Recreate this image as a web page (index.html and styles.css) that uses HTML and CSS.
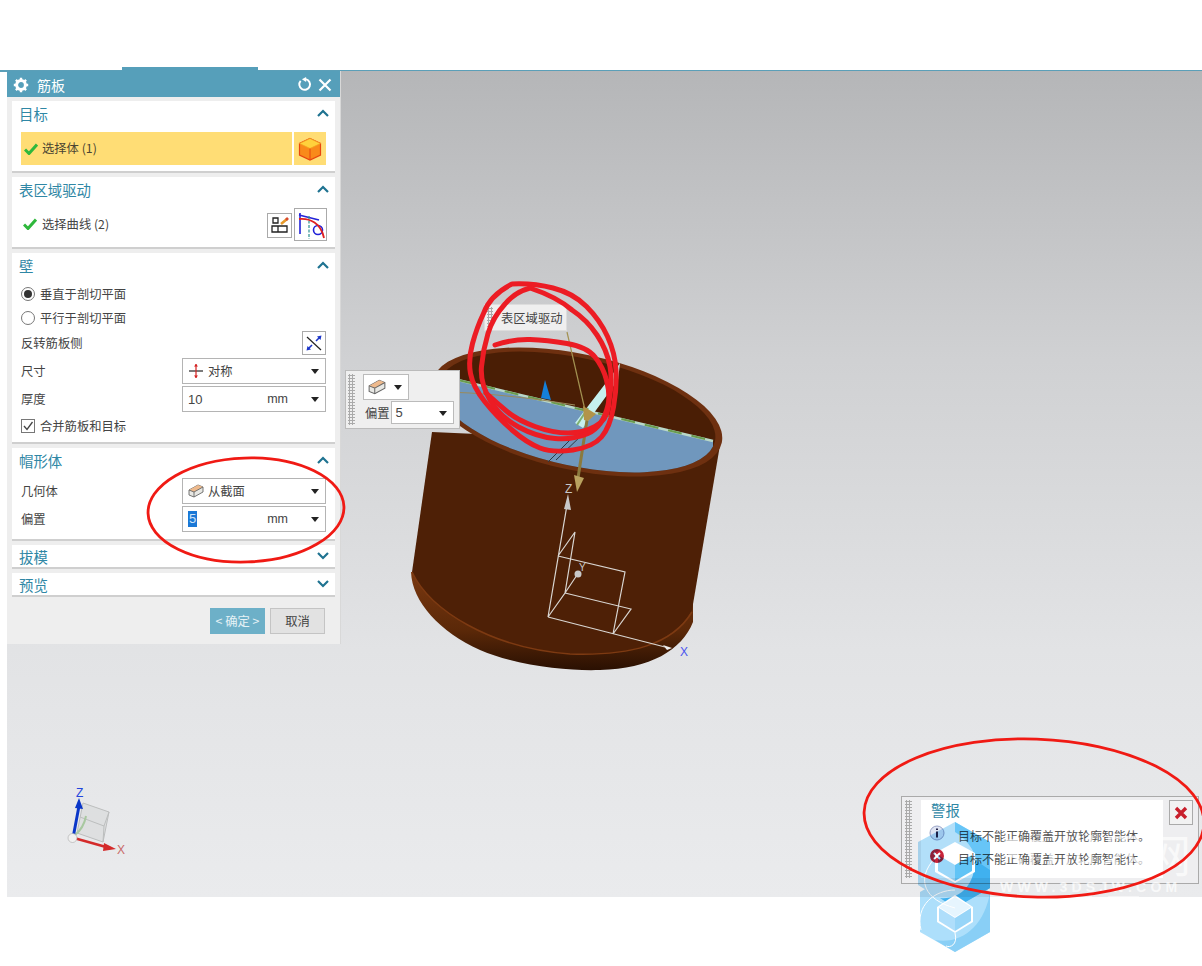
FILE: index.html
```html
<!DOCTYPE html>
<html lang="zh-CN">
<head>
  <meta charset="UTF-8" />
  <title>筋板</title>
  <link rel="stylesheet" href="styles.css">
</head>
<body>
  <div class="top-band"><div class="top-tab"></div></div>

  <div class="viewport">
    <!-- model -->
    <svg class="model" width="1195" height="826" viewBox="7 71 1195 826">
      <defs>
        <linearGradient id="flange" x1="0" y1="0" x2="0" y2="1">
          <stop offset="0" stop-color="#7a3810" />
          <stop offset=".6" stop-color="#5a2808" />
          <stop offset="1" stop-color="#2a1002" />
        </linearGradient>
        <clipPath id="inner">
          <ellipse cx="577" cy="412" rx="141" ry="54" transform="rotate(12 577 412)" />
        </clipPath>
      </defs>
      <path d="M411 572C412 602 440 632 480 650C520 667 570 671 600 670C650 669 682 650 693 622L693 600Z" fill="url(#flange)" />
      <path d="M432 432L412 572C430 610 490 648 570 654C630 656 672 645 692 610L720 445Z" fill="#4e2006" />
      <path d="M412 572C430 610 490 648 570 654C630 656 672 645 692 612" fill="none" stroke="#7d3a12" stroke-width="1.5" />
      <ellipse cx="577" cy="412" rx="148" ry="58" transform="rotate(12 577 412)" fill="#6e3010" />
      <ellipse cx="577" cy="412" rx="141" ry="54" transform="rotate(12 577 412)" fill="#4a1e05" />
      <path d="M400 366L713 441L713 520L400 520Z" fill="#7097bd" clip-path="url(#inner)" />
      <path d="M458 380L713 441" stroke="#b9d8c8" stroke-width="2.5" />
      <path d="M458 380L713 441" stroke="#6a9c50" stroke-width="2" stroke-dasharray="14 10" />
      <path d="M345 398Q420 390 470 393T575 405" fill="none" stroke="#9a8a5a" stroke-width="1" />
      <path d="M545 380L541 398L551 400Z" fill="#1580d8" />
      <path d="M575 423L612 375L620 363L618 380L583 428Z" fill="#c6f0ee" />
      <path d="M577 425L588 408" stroke="#7fb070" stroke-width="2" />
      <path d="M567 332L585 410" stroke="#a39252" stroke-width="1.2" />
      <path d="M570 440L548 462M585 432L556 460" stroke="#2c3a44" stroke-width="1" />
      <path d="M587 420L578 478" stroke="#8a7a3e" stroke-width="3" />
      <path d="M583 406L596 414L588 421L584 420Z" fill="#b29449" />
      <path d="M574 475L584 478L577 492Z" fill="#b9a25f" />
      <!-- datum csys -->
      <g fill="none" stroke="#d9d6d2" stroke-width="1.2">
        <path d="M548 617L567 505M548 617L665 647M558 556L575 532L565 593L548 617M558 556L625 572L613 634M565 593L631 609L613 634M565 593L579 572" />
      </g>
      <path d="M568 494L564 509L571 510Z" fill="#c8c8c8" />
      <circle cx="578" cy="574" r="3.5" fill="#c8c8c8" />
      <path d="M663 645L672 648L667 650Z" fill="#eee" />
      <text x="565" y="493" class="axis axis-grey">Z</text>
      <text x="579" y="571" class="axis axis-grey axis-small">Y</text>
      <text x="680" y="656" class="axis axis-blue">X</text>
    </svg>

    <!-- dialog -->
    <div class="panel">
      <div class="panel-title">
        <svg width="16" height="16" viewBox="0 0 16 16" class="gear">
          <circle cx="8" cy="8" r="4.4" fill="none" stroke="#fff" stroke-width="3" />
          <path d="M8 0.8V3M8 13V15.2M0.8 8H3M13 8H15.2M2.9 2.9L4.5 4.5M11.5 11.5L13.1 13.1M2.9 13.1L4.500 11.5M11.5 4.5L13.1 2.9" stroke="#fff" stroke-width="2.4" />
        </svg>
        <span class="panel-name">筋板</span>
        <svg width="15" height="15" viewBox="0 0 14 14" class="reset">
          <path d="M3.4 3.6A5 5 0 1 0 8 2" fill="none" stroke="#fff" stroke-width="1.8" />
          <path d="M8.5 0L4.6 2.2L8.5 4.6Z" fill="#fff" />
        </svg>
        <svg width="14" height="14" viewBox="0 0 14 14">
          <path d="M1.5 1.5L12.5 12.5M12.5 1.5L1.5 12.5" stroke="#fff" stroke-width="2.2" />
        </svg>
      </div>

      <div class="panel-body">
        <section class="group group-target">
          <div class="group-head"><h4>目标</h4><svg class="chev" viewBox="0 0 12 8"><path d="M1 7L6 2L11 7" /></svg></div>
          <div class="pick-row">
            <div class="pick-main">
              <svg class="check" viewBox="0 0 14 12"><path d="M1 6.5L5 10.5L13 1.5" /></svg>
              <span>选择体 (1)</span>
            </div>
            <div class="pick-icon">
              <svg width="24" height="24" viewBox="0 0 24 24">
                <path d="M12 1.5L22.5 6.5V18L12 23L1.5 18V6.5Z" fill="#f98a1a" stroke="#e8450f" stroke-width="1.2" />
                <path d="M12 1.5L22.5 6.5L12 11.5L1.5 6.5Z" fill="#ffd23c" stroke="#f4a020" stroke-width=".8" />
                <path d="M12 11.5V23" stroke="#e8450f" stroke-width="1" />
              </svg>
            </div>
          </div>
        </section>

        <section class="group group-drive">
          <div class="group-head"><h4>表区域驱动</h4><svg class="chev" viewBox="0 0 12 8"><path d="M1 7L6 2L11 7" /></svg></div>
          <div class="curve-row">
            <svg class="check" viewBox="0 0 14 12"><path d="M1 6.5L5 10.5L13 1.5" /></svg>
            <span class="curve-label">选择曲线 (2)</span>
            <div class="tool-btn tool-small">
              <svg width="23" height="23" viewBox="0 0 23 23" fill="none" stroke="#222" stroke-width="1.3">
                <path d="M5 4H10V9H5ZM4 12H10V18H4ZM10 12H19V18H10Z" />
                <path d="M13 10L19 5" stroke="#e79a2a" stroke-width="2.6" />
                <path d="M18 6L20 4" stroke="#d84a30" stroke-width="2.6" />
              </svg>
            </div>
            <div class="tool-btn tool-large">
              <svg width="31" height="31" viewBox="0 0 31 31" fill="none">
                <path d="M4 6L24 11M5 4V25" stroke="#2323d8" stroke-width="1.6" />
                <path d="M14 7V30" stroke="#2a9090" stroke-width="1.2" stroke-dasharray="3 1.500" />
                <circle cx="23" cy="21" r="4.500" stroke="#2323d8" stroke-width="1.6" />
                <path d="M4 10C15 9 26 14 29 29" stroke="#e02020" stroke-width="1.800" />
              </svg>
            </div>
          </div>
        </section>

        <section class="group group-wall">
          <div class="group-head"><h4>壁</h4><svg class="chev" viewBox="0 0 12 8"><path d="M1 7L6 2L11 7" /></svg></div>
          <label class="opt-row"><span class="radio radio-on"></span>垂直于剖切平面</label>
          <label class="opt-row"><span class="radio"></span>平行于剖切平面</label>
          <div class="flip-row">
            <span>反转筋板侧</span>
            <div class="tool-btn tool-flip">
              <svg width="18" height="18" viewBox="0 0 18 18" fill="none">
                <path d="M2 3L16 16" stroke="#222" stroke-width="1.2" />
                <path d="M3 15L7 11M11 7L15 3" stroke="#1c35c8" stroke-width="1.6" />
                <path d="M1.5 16.5L2.5 12L6 15.5ZM16.5 1.5L12 2.5L15.5 6Z" fill="#1c35c8" />
              </svg>
            </div>
          </div>
          <div class="field-row">
            <span>尺寸</span>
            <div class="combo">
              <svg width="16" height="16" viewBox="0 0 16 16" fill="none">
                <path d="M1 8H15" stroke="#222" stroke-width="1.2" />
                <path d="M8 1V15" stroke="#d42020" stroke-width="1.2" />
                <path d="M6 3.5L8 1L10 3.5ZM6 12.5L8 15L10 12.5Z" fill="#d42020" />
              </svg>
              <span class="combo-text">对称</span>
              <i class="caret"></i>
            </div>
          </div>
          <div class="field-row">
            <span>厚度</span>
            <div class="combo">
              <span class="combo-value">10</span>
              <span class="unit">mm</span>
              <i class="caret"></i>
            </div>
          </div>
          <label class="opt-row opt-merge"><span class="checkbox">
            <svg width="12" height="12" viewBox="0 0 12 12" fill="none"><path d="M2 6L5 9.5L10.5 2" stroke="#444" stroke-width="1.3" /></svg>
          </span>合并筋板和目标</label>
        </section>

        <section class="group group-hat">
          <div class="group-head"><h4>帽形体</h4><svg class="chev" viewBox="0 0 12 8"><path d="M1 7L6 2L11 7" /></svg></div>
          <div class="field-row">
            <span>几何体</span>
            <div class="combo">
              <svg width="16" height="16" viewBox="0 0 16 16">
                <path d="M1 7L10 2L15 4V9L6 14L1 12Z" fill="#e8e8e4" stroke="#666" stroke-width=".9" />
                <path d="M6 9L15 4L10 2L1 7Z" fill="#eeb98c" />
                <path d="M1 7L6 9V14M6 9L15 4" fill="none" stroke="#666" stroke-width=".9" />
              </svg>
              <span class="combo-text">从截面</span>
              <i class="caret"></i>
            </div>
          </div>
          <div class="field-row">
            <span>偏置</span>
            <div class="combo">
              <span class="combo-value combo-selected">5</span>
              <span class="unit">mm</span>
              <i class="caret"></i>
            </div>
          </div>
        </section>

        <section class="group group-closed">
          <div class="group-head"><h4>拔模</h4><svg class="chev" viewBox="0 0 12 8"><path d="M1 1L6 6L11 1" /></svg></div>
        </section>
        <section class="group group-closed">
          <div class="group-head"><h4>预览</h4><svg class="chev" viewBox="0 0 12 8"><path d="M1 1L6 6L11 1" /></svg></div>
        </section>

        <div class="panel-actions">
          <button class="btn btn-ok">&lt; 确定 &gt;</button>
          <button class="btn">取消</button>
        </div>
      </div>
    </div>

    <!-- floating bits over the model -->
    <div class="drive-tag"><i class="grip grip-tag"></i>表区域驱动</div>

    <div class="float-bar">
      <i class="grip grip-bar"></i>
      <div class="float-body">
        <div class="float-pick">
          <svg width="18" height="18" viewBox="0 0 16 16">
            <path d="M1 7L10 2L15 4V9L6 14L1 12Z" fill="#e8e8e4" stroke="#666" stroke-width=".9" />
            <path d="M6 9L15 4L10 2L1 7Z" fill="#eeb98c" />
            <path d="M1 7L6 9V14M6 9L15 4" fill="none" stroke="#666" stroke-width=".9" />
          </svg>
          <i class="caret"></i>
        </div>
        <div class="float-field">
          <span>偏置</span>
          <div class="float-input"><span>5</span><i class="caret"></i></div>
        </div>
      </div>
    </div>

    <svg class="triad" width="70" height="80" viewBox="60 782 70 80">
      <path d="M83 803L109 812L103 842L77 833Z" fill="#d6d7d7" fill-opacity=".55" stroke="#bcbebe" />
      <path d="M80 817L104 826L109 812M104 826L103 842" fill="none" stroke="#bcbebe" />
      <path d="M74 836Q84 828 86 816" fill="none" stroke="#a8c8a0" stroke-width="2" />
      <path d="M73 838L79 806" stroke="#0a36c8" stroke-width="3" />
      <path d="M79 798L75 808L83 809Z" fill="#0a36c8" />
      <path d="M74 838L106 847" stroke="#d42a2a" stroke-width="2.5" />
      <path d="M116 849L104 843L103 851Z" fill="#d42a2a" />
      <circle cx="72.500" cy="838" r="4.500" fill="#f0f0f0" stroke="#aaa" stroke-width=".6" />
      <text x="76" y="797" class="axis axis-navy">Z</text>
      <text x="117" y="854" class="axis axis-red">X</text>
    </svg>

    <div class="alert">
      <i class="grip grip-alert"></i>
      <div class="alert-body">
        <h5>警报</h5>
        <div class="alert-row">
          <svg width="16" height="16" viewBox="0 0 16 16">
            <circle cx="8" cy="8" r="7" fill="#dfe4f2" stroke="#9aa4c8" />
            <path d="M8 3.500V5M8 6.500V12.500" stroke="#23234a" stroke-width="2" />
          </svg>
          <span>目标不能正确覆盖开放轮廓智能体。</span>
        </div>
        <div class="alert-row">
          <svg width="16" height="16" viewBox="0 0 16 16">
            <circle cx="8" cy="8" r="7" fill="#c9243a" />
            <path d="M5 5L11 11M11 5L5 11" stroke="#fff" stroke-width="2" />
          </svg>
          <span>目标不能正确覆盖开放轮廓智能体。</span>
        </div>
      </div>
      <div class="alert-close">
        <svg width="14" height="14" viewBox="0 0 14 14"><path d="M2 2L12 12M12 2L2 12" stroke="#c8202c" stroke-width="3.4" /></svg>
      </div>
    </div>
  </div>

  <!-- watermark and pen marks lie over everything -->
  <div class="wm-title">3D世界网</div>
  <div class="wm-url">WWW.3DSJW.COM</div>
  <div class="wm-big">3D世界网</div>

  <svg class="logo" width="74" height="131" viewBox="918 822 74 131">
    <path d="M920 892L955 872L990 892V932L955 952L920 932Z" fill="#a4dcfb" />
    <path d="M990 892V932L955 952L935 940C962 945 985 925 990 892Z" fill="#7ccaf5" />
    <path d="M955 822L990 842V888L955 908L918 885V842Z" fill="#a9dcf9" />
    <path d="M955 822L990 842V888L958 906C985 890 985 850 955 832Z" fill="#55bff6" />
    <path d="M975 860L990 870V888L955 908L940 898C960 900 975 885 975 860Z" fill="#2aa8ee" />
    <path d="M955 842L975 853V872L955 883L935 872V853Z" fill="#fff" />
    <path d="M938 855L955 865V881L938 871Z" fill="#8fd3f9" />
    <path d="M972 855L955 865V881L972 871Z" fill="#4fbdf5" />
    <path d="M955 895L973 907V922L955 933L937 922V907Z" fill="#fff" />
    <path d="M939 908L955 918V931L939 921Z" fill="#a6dafb" />
    <path d="M971 908L955 918V931L971 921Z" fill="#8bd0f8" />
    <path d="M939 907L955 897L971 907L955 917Z" fill="#e3f4fe" />
    <path d="M921 930C915 905 935 890 955 890M955 933C958 945 950 948 946 946M935 858C915 880 925 900 955 908" fill="none" stroke="#fff" stroke-width="1" />
  </svg>

  <svg class="marks" width="1202" height="966" viewBox="0 0 1202 966">
    <ellipse cx="246" cy="510" rx="98" ry="52" transform="rotate(-2 246 510)" class="pen" />
    <ellipse cx="1034" cy="818" rx="170" ry="79" transform="rotate(2 1034 818)" class="pen" />
    <path class="marker" d="M495 345Q513 339 530 339.500Q547 340 567 343.500Q587 347 595 357Q603 367 606.500 380Q610 393 608.500 406.500Q607 420 595 426.500Q583 433 568 433Q553 433 535 426.500Q517 420 507 411.500Q497 403 486 393" />
    <path class="marker" d="M512 284Q533 283 553 288Q573 293 586.500 306.500Q600 320 607.500 336.500Q615 353 616 370Q617 387 613.500 407Q610 427 601.500 437Q593 447 573 450Q553 453 540 448Q527 443 512 430Q497 417 485 402Q473 387 470.500 373.500Q468 360 472.500 343.500Q477 327 483.500 313.500Q490 295 512 284" />
    <path class="marker" d="M530 288Q557 297 572 310Q587 320 597 335Q607 350 610 366.500Q613 383 608 405Q603 427 588 433.500Q573 440 555 438.500Q537 437 518.500 427Q500 417 490 400Q480 383 481.500 366.500Q483 350 488 333.500Q493 317 505 304Q515 292 530 288" />
  </svg>
</body>
</html>
```

FILE: styles.css
```css
* {
  box-sizing: border-box;
}
html, body {
  margin: 0;
  height: 966px;
  overflow: hidden;
}
body {
  position: relative;
  background: #fff;
  font-family: "Noto Sans CJK SC", "Liberation Sans", sans-serif;
  font-size: 12.3px;
  color: #444;
  filter: blur(.3px);
}
.top-band {
  height: 72px;
  border-bottom: 2px solid #5b9fb8;
  position: relative;
}
.top-tab {
  position: absolute;
  left: 122px;
  bottom: -2px;
  width: 136px;
  height: 5px;
  background: #569fba;
}
.viewport {
  position: relative;
  margin-left: 7px;
  margin-top: -1px;
  height: 826px;
  background: linear-gradient(#b5b6b8 0%, #d0d1d3 35%, #e2e3e5 70%, #eaebed 100%);
}
.model {
  position: absolute;
  left: 0;
  top: 0;
}

/* dialog */
.panel {
  position: relative;
  width: 334px;
  height: 573px;
  background: #eee;
  border-right: 1px solid #d8d8d8;
}
.panel-title {
  display: flex;
  align-items: center;
  height: 26px;
  padding: 1px 8px 0 6px;
  gap: 6px;
  background: #569fba;
  color: #fff;
  font-size: 14px;
}
.panel-name {
  flex: 1;
  margin-left: 2px;
}
.panel-body {
  padding: 4px 5px 0;
  display: flex;
  flex-direction: column;
  gap: 4px;
}
.group {
  background: #fff;
  border-bottom: 2px solid #cfcfcf;
  padding: 0 9px 0 8px;
}
.group-target, .group-drive {
  height: 72px;
}
.group-wall {
  height: 191px;
}
.group-hat {
  height: 93px;
}
.group-closed {
  height: 24px;
}
.group-head {
  display: flex;
  justify-content: space-between;
  align-items: center;
  height: 28px;
  padding-bottom: 3px;
}
.group-closed .group-head {
  height: 24px;
  padding-bottom: 1px;
}
.group-head h4 {
  margin: 0;
  font-size: 14.4px;
  font-weight: 400;
  color: #2f87a5;
  margin-left: -1px;
}
.chev {
  width: 12px;
  height: 8px;
  margin-right: -3px;
  margin-bottom: 2px;
  fill: none;
  stroke: #1f7391;
  stroke-width: 2.2;
}
.pick-row {
  display: flex;
  height: 33px;
  margin-top: 3px;
  margin-left: 1px;
  gap: 2px;
}
.pick-main {
  flex: 1;
  display: flex;
  align-items: center;
  background: #ffdd75;
  padding-left: 3px;
  gap: 4px;
  color: #4a4432;
}
.pick-main span {
  margin-top: -2px;
}
.pick-icon {
  width: 32px;
  background: #ffdd75;
  display: flex;
  align-items: center;
  justify-content: center;
}
.check {
  width: 14px;
  height: 12px;
  fill: none;
  stroke: #2fb83c;
  stroke-width: 3;
}
.curve-row {
  display: flex;
  align-items: center;
  height: 34px;
  margin-top: 2px;
  padding-left: 3px;
  gap: 5px;
}
.curve-label {
  flex: 1;
}
.tool-btn {
  display: flex;
  align-items: center;
  justify-content: center;
  border: 1px solid #aaa;
  background: #fff;
}
.tool-small {
  width: 25px;
  height: 25px;
  margin-right: -3px;
  margin-top: 2px;
}
.tool-large {
  width: 33px;
  height: 33px;
  margin-right: -1px;
}
.opt-row {
  display: flex;
  align-items: center;
  height: 24px;
  gap: 5px;
  padding-left: 1px;
}
.group-wall .opt-row:nth-of-type(1) {
  margin-top: 1px;
}
.radio {
  width: 14px;
  height: 14px;
  border: 1px solid #777;
  border-radius: 50%;
  background: #fff;
  position: relative;
}
.radio-on::after {
  content: "";
  position: absolute;
  left: 2px;
  top: 2px;
  width: 8px;
  height: 8px;
  border-radius: 50%;
  background: #333;
}
.flip-row {
  display: flex;
  justify-content: space-between;
  align-items: center;
  height: 24px;
  margin-top: 1px;
  margin-bottom: 2px;
  padding-left: 1px;
}
.tool-flip {
  width: 24px;
  height: 24px;
}
.field-row {
  display: grid;
  grid-template-columns: 161px 144px;
  align-items: center;
  height: 28px;
  padding-left: 1px;
}
.group-hat .group-head {
  margin-bottom: 1px;
}
.combo {
  position: relative;
  display: flex;
  align-items: center;
  height: 26px;
  border: 1px solid #b4b4b4;
  background: #fff;
  padding-left: 5px;
  gap: 4px;
}
.combo-text {
  flex: 1;
}
.combo-value {
  flex: 1;
  font-family: "Liberation Sans", sans-serif;
  font-size: 13px;
}
.combo-selected {
  flex: none;
  background: #1a78d6;
  color: #cfe4f8;
  padding: 0 1px;
  line-height: 16px;
}
.unit {
  margin-right: 37px;
  margin-left: auto;
  font-family: "Liberation Sans", sans-serif;
  font-size: 12.5px;
}
.caret {
  position: absolute;
  right: 6px;
  top: 10px;
  width: 0;
  height: 0;
  border-left: 4px solid transparent;
  border-right: 4px solid transparent;
  border-top: 5px solid #222;
}
.opt-merge {
  height: 25px;
}
.checkbox {
  display: flex;
  align-items: center;
  justify-content: center;
  width: 14px;
  height: 14px;
  border: 1px solid #777;
  background: #fff;
}
.panel-actions {
  display: flex;
  justify-content: flex-end;
  gap: 5px;
  padding: 7px 10px 0 0;
}
.btn {
  width: 55px;
  height: 26px;
  padding: 0;
  border: 1px solid #c4c4c4;
  background: #e2e2e2;
  color: #444;
  font: inherit;
}
.btn-ok {
  background: #6db0c8;
  border-color: #6db0c8;
  color: #e6f2f6;
}

/* over the model */
.grip {
  display: block;
  background-image: radial-gradient(#aaa 1px, transparent 1.2px);
  background-size: 3px 3px;
}
.drive-tag {
  position: absolute;
  left: 477px;
  top: 233px;
  width: 83px;
  height: 27px;
  display: flex;
  align-items: center;
  padding-left: 2px;
  gap: 8px;
  background: #efefef;
  border: 1px solid #ddd;
  white-space: nowrap;
}
.grip-tag {
  flex: none;
  width: 6px;
  height: 22px;
}
.float-bar {
  position: absolute;
  left: 338px;
  top: 299px;
  width: 115px;
  height: 59px;
  display: flex;
  background: #efefef;
  border: 1px solid #bbb;
  padding: 3px 3px 3px 2px;
}
.grip-bar {
  width: 7px;
  margin-right: 8px;
}
.float-pick {
  position: relative;
  width: 46px;
  height: 26px;
  display: flex;
  align-items: center;
  padding-left: 4px;
  background: #fff;
  border: 1px solid #bbb;
}
.float-field {
  display: flex;
  align-items: center;
  margin-top: 1px;
  margin-left: 2px;
  gap: 1px;
}
.float-input {
  position: relative;
  width: 63px;
  height: 23px;
  padding-left: 4px;
  background: #fff;
  border: 1px solid #bbb;
  font-family: "Liberation Sans", sans-serif;
  font-size: 13px;
  line-height: 21px;
}
.float-input .caret {
  top: 9px;
}
.triad {
  position: absolute;
  left: 53px;
  top: 711px;
}
.axis {
  font-family: "Liberation Sans", sans-serif;
  font-size: 12px;
}
.axis-grey {
  fill: #c8c8c8;
}
.axis-small {
  font-size: 10px;
}
.axis-blue {
  fill: #4a55ee;
}
.axis-navy {
  fill: #2244dd;
}
.axis-red {
  fill: #c86a6a;
}
.alert {
  position: absolute;
  left: 894px;
  top: 725px;
  width: 298px;
  height: 88px;
  display: flex;
  align-items: flex-start;
  background: #eeeef0;
  border: 1px solid #aaa;
  padding: 3px 5px 4px 3px;
}
.grip-alert {
  flex: none;
  width: 7px;
  height: 78px;
  margin-right: 9px;
}
.alert-body {
  flex: none;
  width: 242px;
  height: 78px;
  background: #fff;
  padding: 0 10px;
}
.alert-body h5 {
  margin: 0;
  height: 24px;
  font-size: 14.4px;
  line-height: 20px;
  font-weight: 400;
  color: #2f87a5;
}
.alert-row {
  display: flex;
  align-items: center;
  height: 23px;
  gap: 13px;
  margin-left: -2px;
  font-size: 12px;
  color: #555;
  white-space: nowrap;
}
.alert-row svg {
  margin-top: -6px;
}
.alert-close {
  display: flex;
  align-items: center;
  justify-content: center;
  width: 25px;
  height: 25px;
  margin-left: 6px;
  border: 1px solid #aaa;
  background: #f2f2f2;
}

/* watermark */
.wm-title, .wm-url, .wm-big {
  position: absolute;
  color: #fff;
  white-space: nowrap;
}
.wm-title {
  left: 1000px;
  top: 826px;
  font-size: 45px;
  line-height: 56px;
  opacity: .65;
}
.wm-url {
  left: 1000px;
  top: 879px;
  font-family: "Liberation Sans", sans-serif;
  font-size: 14px;
  font-weight: 700;
  letter-spacing: 4.2px;
  opacity: .7;
}
.wm-big {
  left: 1000px;
  top: 886px;
  font-size: 45px;
  line-height: 56px;
  opacity: .5;
}
.logo {
  position: absolute;
  left: 918px;
  top: 822px;
  mix-blend-mode: multiply;
  opacity: .9;
}
.marks {
  position: absolute;
  left: 0;
  top: 0;
  pointer-events: none;
}
.pen {
  fill: none;
  stroke: #f01a14;
  stroke-width: 2.8;
}
.marker {
  fill: none;
  stroke: #ec1c24;
  stroke-width: 5;
  stroke-linecap: round;
}
```
